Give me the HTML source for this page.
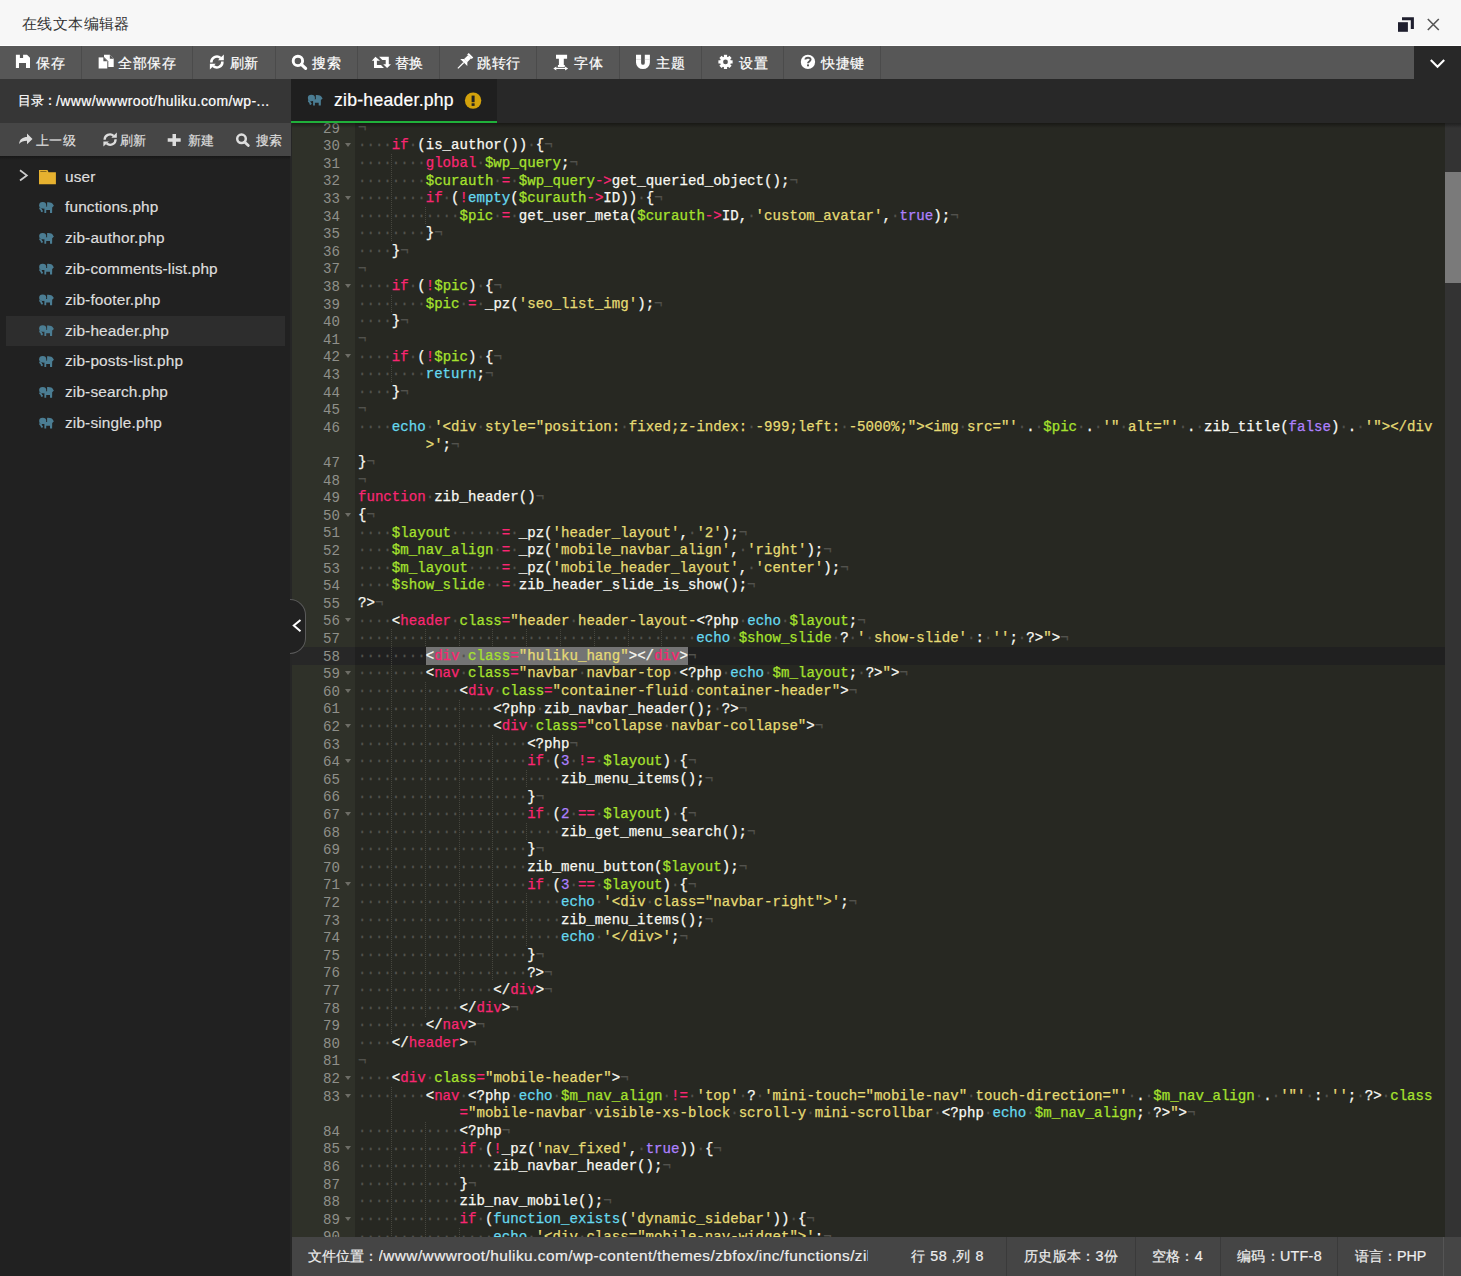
<!DOCTYPE html>
<html><head><meta charset="utf-8">
<style>
*{box-sizing:border-box;margin:0;padding:0}
html,body{width:1461px;height:1276px;overflow:hidden;background:#212121;font-family:"Liberation Sans",sans-serif}
.abs{position:absolute}
.t{position:absolute;white-space:nowrap;line-height:1;-webkit-text-stroke:0.2px currentColor}
#title{left:0;top:0;width:1461px;height:46px;background:#f7f7f7}
#tb{left:0;top:46px;width:1414px;height:33px;background:#575757}
#tbr{left:1414px;top:46px;width:47px;height:33px;background:#282828}
.dv{position:absolute;top:46px;width:1px;height:33px;background:#4b4b4b}
.tbt{color:#fff;font-size:13.8px;letter-spacing:0.7px;top:56.5px}
#side{left:0;top:79px;width:291px;height:1197px;background:#212121}
#dir{left:0;top:79px;width:291px;height:44px;background:#363636}
#stb{left:0;top:123px;width:291px;height:33px;background:#464646}
.sbt{color:#ddd;font-size:13.4px;letter-spacing:0.3px;top:134px}
.fl{color:#ddd;font-size:15.4px;letter-spacing:0.15px}
#sel{left:6px;top:316px;width:279px;height:30px;background:#2d2d2d}
#tabbar{left:291px;top:79px;width:1170px;height:44px;background:#282828}
#tab{left:291px;top:79px;width:206px;height:42px;background:#1f1f1f}
#tabline{left:291px;top:121px;width:206px;height:2px;background:#20b03a}
#editor{left:292px;top:123px;width:1169px;height:1114px;background:#272822;overflow:hidden}
#sideedge{left:290px;top:156px;width:2px;height:1120px;background:#262626}
#gutter{left:0;top:0;width:63px;height:1114px;background:#2f3129;color:#8f908a}
.gl{position:absolute;left:0;width:63px;height:17.6px;padding-top:1.5px;font-family:"Liberation Mono",monospace;font-size:14.1px;line-height:17.6px;padding-right:15px;text-align:right}
.gl.gact{background:#272727}
.fw{position:absolute;right:4px;top:6.5px;width:0;height:0;border-left:3.2px solid transparent;border-right:3.2px solid transparent;border-top:4.5px solid #6d6d66}
#code{left:63px;top:0;width:1090px;height:1114px}
.ln{position:absolute;left:3px;right:0;height:17.6px;padding-top:0.75px;-webkit-text-stroke:0.25px currentColor;font-family:"Liberation Mono",monospace;font-size:14.1px;line-height:17.6px;white-space:pre;color:#f8f8f2}
.actbg{position:absolute;left:0;right:0;height:17.6px;background:#202020}
.ln i{font-style:normal}
.k{color:#f92672}.s{color:#66d9ef}.v{color:#a6e22e}.q{color:#e6db74}.n{color:#ae81ff}.w{color:#52524d}
.ig{position:absolute;width:1px;background:repeating-linear-gradient(#47473f 0 1px,transparent 1px 2px)}
#guides{left:2px;top:0}
#selbox{left:70.7px;top:524px;width:262px;height:18px;background:#747474}
#sb{left:1153px;top:0;width:16px;height:1114px;background:#333}
#thumb{left:0;top:49px;width:16px;height:111px;background:#7a7a7a}
#status{left:292px;top:1237px;width:1169px;height:39px;background:#454545}
.stt{color:#eee;font-size:14.3px;top:1249px}
.sd{position:absolute;top:1237px;width:1px;height:39px;background:#3a3a3a}
#handle{left:290px;top:599px;width:16px;height:55px;background:#212121;border:1px solid #5a5a5a;border-left:none;border-radius:0 16px 16px 0}
#ov{position:absolute;left:0;top:0;width:1461px;height:1276px;pointer-events:none}
</style></head><body>
<div id="title" class="abs"></div>
<div class="abs" style="left:0;top:45px;width:1461px;height:1px;background:#fff"></div>
<div class="t" style="left:22px;top:17px;font-size:14.6px;letter-spacing:0.4px;color:#333;-webkit-text-stroke:0">在线文本编辑器</div>
<div id="tb" class="abs"></div>
<div id="tbr" class="abs"></div>
<div class="dv" style="left:81px"></div>
<div class="dv" style="left:192px"></div>
<div class="dv" style="left:275px"></div>
<div class="dv" style="left:357px"></div>
<div class="dv" style="left:439px"></div>
<div class="dv" style="left:536px"></div>
<div class="dv" style="left:619px"></div>
<div class="dv" style="left:701px"></div>
<div class="dv" style="left:783px"></div>
<div class="dv" style="left:880px"></div>
<div class="t tbt" style="left:36px">保存</div>
<div class="t tbt" style="left:118px">全部保存</div>
<div class="t tbt" style="left:229.5px">刷新</div>
<div class="t tbt" style="left:312px">搜索</div>
<div class="t tbt" style="left:394.5px">替换</div>
<div class="t tbt" style="left:477px">跳转行</div>
<div class="t tbt" style="left:574px">字体</div>
<div class="t tbt" style="left:656px">主题</div>
<div class="t tbt" style="left:739px">设置</div>
<div class="t tbt" style="left:821px">快捷键</div>

<div id="side" class="abs"></div>
<div id="dir" class="abs"></div>
<div class="t" style="left:17.5px;top:93.5px;font-size:13.4px;color:#fff">目录</div><div class="t" style="left:42.5px;top:93px;font-size:14.3px;color:#fff">：</div><div class="t" style="left:56px;top:93.5px;font-size:14px;letter-spacing:0.4px;color:#fff">/www/wwwroot/huliku.com/wp-...</div>
<div id="stb" class="abs"></div>
<div class="t sbt" style="left:36px">上一级</div>
<div class="t sbt" style="left:120px">刷新</div>
<div class="t sbt" style="left:188px">新建</div>
<div class="t sbt" style="left:256px">搜索</div>
<div id="sel" class="abs"></div>
<div class="t fl" style="left:65px;top:169px">user</div>
<div class="t fl" style="left:65px;top:199px">functions.php</div>
<div class="t fl" style="left:65px;top:230px">zib-author.php</div>
<div class="t fl" style="left:65px;top:261px">zib-comments-list.php</div>
<div class="t fl" style="left:65px;top:292px">zib-footer.php</div>
<div class="t fl" style="left:65px;top:323px">zib-header.php</div>
<div class="t fl" style="left:65px;top:353px">zib-posts-list.php</div>
<div class="t fl" style="left:65px;top:384px">zib-search.php</div>
<div class="t fl" style="left:65px;top:415px">zib-single.php</div>

<div id="tabbar" class="abs"></div>
<div id="tab" class="abs"></div>
<div id="tabline" class="abs"></div>
<div class="t" style="left:334px;top:92px;font-size:17.6px;letter-spacing:0.25px;color:#fff">zib-header.php</div>

<div id="editor" class="abs">
  <div id="gutter" class="abs">
<div class="gl" style="top:-4.0px">29</div>
<div class="gl" style="top:13.6px">30<b class="fw"></b></div>
<div class="gl" style="top:31.2px">31</div>
<div class="gl" style="top:48.8px">32</div>
<div class="gl" style="top:66.4px">33<b class="fw"></b></div>
<div class="gl" style="top:84.0px">34</div>
<div class="gl" style="top:101.6px">35</div>
<div class="gl" style="top:119.2px">36</div>
<div class="gl" style="top:136.8px">37</div>
<div class="gl" style="top:154.4px">38<b class="fw"></b></div>
<div class="gl" style="top:172.0px">39</div>
<div class="gl" style="top:189.6px">40</div>
<div class="gl" style="top:207.2px">41</div>
<div class="gl" style="top:224.8px">42<b class="fw"></b></div>
<div class="gl" style="top:242.4px">43</div>
<div class="gl" style="top:260.0px">44</div>
<div class="gl" style="top:277.6px">45</div>
<div class="gl" style="top:295.2px">46</div>
<div class="gl" style="top:330.4px">47</div>
<div class="gl" style="top:348.0px">48</div>
<div class="gl" style="top:365.6px">49</div>
<div class="gl" style="top:383.2px">50<b class="fw"></b></div>
<div class="gl" style="top:400.8px">51</div>
<div class="gl" style="top:418.4px">52</div>
<div class="gl" style="top:436.0px">53</div>
<div class="gl" style="top:453.6px">54</div>
<div class="gl" style="top:471.2px">55</div>
<div class="gl" style="top:488.8px">56<b class="fw"></b></div>
<div class="gl" style="top:506.4px">57</div>
<div class="gl gact" style="top:524.0px">58</div>
<div class="gl" style="top:541.6px">59<b class="fw"></b></div>
<div class="gl" style="top:559.2px">60<b class="fw"></b></div>
<div class="gl" style="top:576.8px">61</div>
<div class="gl" style="top:594.4px">62<b class="fw"></b></div>
<div class="gl" style="top:612.0px">63</div>
<div class="gl" style="top:629.6px">64<b class="fw"></b></div>
<div class="gl" style="top:647.2px">65</div>
<div class="gl" style="top:664.8px">66</div>
<div class="gl" style="top:682.4px">67<b class="fw"></b></div>
<div class="gl" style="top:700.0px">68</div>
<div class="gl" style="top:717.6px">69</div>
<div class="gl" style="top:735.2px">70</div>
<div class="gl" style="top:752.8px">71<b class="fw"></b></div>
<div class="gl" style="top:770.4px">72</div>
<div class="gl" style="top:788.0px">73</div>
<div class="gl" style="top:805.6px">74</div>
<div class="gl" style="top:823.2px">75</div>
<div class="gl" style="top:840.8px">76</div>
<div class="gl" style="top:858.4px">77</div>
<div class="gl" style="top:876.0px">78</div>
<div class="gl" style="top:893.6px">79</div>
<div class="gl" style="top:911.2px">80</div>
<div class="gl" style="top:928.8px">81</div>
<div class="gl" style="top:946.4px">82<b class="fw"></b></div>
<div class="gl" style="top:964.0px">83<b class="fw"></b></div>
<div class="gl" style="top:999.2px">84</div>
<div class="gl" style="top:1016.8px">85<b class="fw"></b></div>
<div class="gl" style="top:1034.4px">86</div>
<div class="gl" style="top:1052.0px">87</div>
<div class="gl" style="top:1069.6px">88</div>
<div class="gl" style="top:1087.2px">89<b class="fw"></b></div>
<div class="gl" style="top:1104.8px">90</div>
  </div>
  <div id="code" class="abs">
<div class="actbg" style="top:524.0px"></div><div id="selbox" class="abs"></div>
<div class="ln" style="top:-4.0px"><i class="w">¬</i></div>
<div class="ln" style="top:13.6px"><i class="w">····</i><i class="k">if</i><i class="w">·</i>(is_author())<i class="w">·</i>{<i class="w">¬</i></div>
<div class="ln" style="top:31.2px"><i class="w">········</i><i class="k">global</i><i class="w">·</i><i class="v">$wp_query</i>;<i class="w">¬</i></div>
<div class="ln" style="top:48.8px"><i class="w">········</i><i class="v">$curauth</i><i class="w">·</i><i class="k">=</i><i class="w">·</i><i class="v">$wp_query</i><i class="k">-&gt;</i>get_queried_object();<i class="w">¬</i></div>
<div class="ln" style="top:66.4px"><i class="w">········</i><i class="k">if</i><i class="w">·</i>(<i class="k">!</i><i class="s">empty</i>(<i class="v">$curauth</i><i class="k">-&gt;</i>ID))<i class="w">·</i>{<i class="w">¬</i></div>
<div class="ln" style="top:84.0px"><i class="w">············</i><i class="v">$pic</i><i class="w">·</i><i class="k">=</i><i class="w">·</i>get_user_meta(<i class="v">$curauth</i><i class="k">-&gt;</i>ID,<i class="w">·</i><i class="q">'custom_avatar'</i>,<i class="w">·</i><i class="n">true</i>);<i class="w">¬</i></div>
<div class="ln" style="top:101.6px"><i class="w">········</i>}<i class="w">¬</i></div>
<div class="ln" style="top:119.2px"><i class="w">····</i>}<i class="w">¬</i></div>
<div class="ln" style="top:136.8px"><i class="w">¬</i></div>
<div class="ln" style="top:154.4px"><i class="w">····</i><i class="k">if</i><i class="w">·</i>(<i class="k">!</i><i class="v">$pic</i>)<i class="w">·</i>{<i class="w">¬</i></div>
<div class="ln" style="top:172.0px"><i class="w">········</i><i class="v">$pic</i><i class="w">·</i><i class="k">=</i><i class="w">·</i>_pz(<i class="q">'seo_list_img'</i>);<i class="w">¬</i></div>
<div class="ln" style="top:189.6px"><i class="w">····</i>}<i class="w">¬</i></div>
<div class="ln" style="top:207.2px"><i class="w">¬</i></div>
<div class="ln" style="top:224.8px"><i class="w">····</i><i class="k">if</i><i class="w">·</i>(<i class="k">!</i><i class="v">$pic</i>)<i class="w">·</i>{<i class="w">¬</i></div>
<div class="ln" style="top:242.4px"><i class="w">········</i><i class="s">return</i>;<i class="w">¬</i></div>
<div class="ln" style="top:260.0px"><i class="w">····</i>}<i class="w">¬</i></div>
<div class="ln" style="top:277.6px"><i class="w">¬</i></div>
<div class="ln" style="top:295.2px"><i class="w">····</i><i class="s">echo</i><i class="w">·</i><i class="q">'&lt;div</i><i class="w">·</i><i class="q">style="position:</i><i class="w">·</i><i class="q">fixed;z-index:</i><i class="w">·</i><i class="q">-999;left:</i><i class="w">·</i><i class="q">-5000%;"&gt;&lt;img</i><i class="w">·</i><i class="q">src="'</i><i class="w">·</i>.<i class="w">·</i><i class="v">$pic</i><i class="w">·</i>.<i class="w">·</i><i class="q">'"</i><i class="w">·</i><i class="q">alt="'</i><i class="w">·</i>.<i class="w">·</i>zib_title(<i class="n">false</i>)<i class="w">·</i>.<i class="w">·</i><i class="q">'"&gt;&lt;/div</i></div>
<div class="ln" style="top:312.8px">        <i class="q">&gt;'</i>;<i class="w">¬</i></div>
<div class="ln" style="top:330.4px">}<i class="w">¬</i></div>
<div class="ln" style="top:348.0px"><i class="w">¬</i></div>
<div class="ln" style="top:365.6px"><i class="k">function</i><i class="w">·</i>zib_header()<i class="w">¬</i></div>
<div class="ln" style="top:383.2px">{<i class="w">¬</i></div>
<div class="ln" style="top:400.8px"><i class="w">····</i><i class="v">$layout</i><i class="w">······</i><i class="k">=</i><i class="w">·</i>_pz(<i class="q">'header_layout'</i>,<i class="w">·</i><i class="q">'2'</i>);<i class="w">¬</i></div>
<div class="ln" style="top:418.4px"><i class="w">····</i><i class="v">$m_nav_align</i><i class="w">·</i><i class="k">=</i><i class="w">·</i>_pz(<i class="q">'mobile_navbar_align'</i>,<i class="w">·</i><i class="q">'right'</i>);<i class="w">¬</i></div>
<div class="ln" style="top:436.0px"><i class="w">····</i><i class="v">$m_layout</i><i class="w">····</i><i class="k">=</i><i class="w">·</i>_pz(<i class="q">'mobile_header_layout'</i>,<i class="w">·</i><i class="q">'center'</i>);<i class="w">¬</i></div>
<div class="ln" style="top:453.6px"><i class="w">····</i><i class="v">$show_slide</i><i class="w">··</i><i class="k">=</i><i class="w">·</i>zib_header_slide_is_show();<i class="w">¬</i></div>
<div class="ln" style="top:471.2px">?&gt;<i class="w">¬</i></div>
<div class="ln" style="top:488.8px"><i class="w">····</i>&lt;<i class="k">header</i><i class="w">·</i><i class="v">class</i><i class="k">=</i><i class="q">"header</i><i class="w">·</i><i class="q">header-layout-</i>&lt;?php<i class="w">·</i><i class="s">echo</i><i class="w">·</i><i class="v">$layout</i>;<i class="w">¬</i></div>
<div class="ln" style="top:506.4px"><i class="w">········································</i><i class="s">echo</i><i class="w">·</i><i class="v">$show_slide</i><i class="w">·</i>?<i class="w">·</i><i class="q">'</i><i class="w">·</i><i class="q">show-slide'</i><i class="w">·</i>:<i class="w">·</i><i class="q">''</i>;<i class="w">·</i>?&gt;<i class="q">"</i>&gt;<i class="w">¬</i></div>
<div class="ln" style="top:524.0px"><i class="w">········</i>&lt;<i class="k">div</i><i class="w">·</i><i class="v">class</i><i class="k">=</i><i class="q">"huliku_hang"</i>&gt;&lt;/<i class="k">div</i>&gt;<i class="w">¬</i></div>
<div class="ln" style="top:541.6px"><i class="w">········</i>&lt;<i class="k">nav</i><i class="w">·</i><i class="v">class</i><i class="k">=</i><i class="q">"navbar</i><i class="w">·</i><i class="q">navbar-top</i><i class="w">·</i>&lt;?php<i class="w">·</i><i class="s">echo</i><i class="w">·</i><i class="v">$m_layout</i>;<i class="w">·</i>?&gt;<i class="q">"</i>&gt;<i class="w">¬</i></div>
<div class="ln" style="top:559.2px"><i class="w">············</i>&lt;<i class="k">div</i><i class="w">·</i><i class="v">class</i><i class="k">=</i><i class="q">"container-fluid</i><i class="w">·</i><i class="q">container-header"</i>&gt;<i class="w">¬</i></div>
<div class="ln" style="top:576.8px"><i class="w">················</i>&lt;?php<i class="w">·</i>zib_navbar_header();<i class="w">·</i>?&gt;<i class="w">¬</i></div>
<div class="ln" style="top:594.4px"><i class="w">················</i>&lt;<i class="k">div</i><i class="w">·</i><i class="v">class</i><i class="k">=</i><i class="q">"collapse</i><i class="w">·</i><i class="q">navbar-collapse"</i>&gt;<i class="w">¬</i></div>
<div class="ln" style="top:612.0px"><i class="w">····················</i>&lt;?php<i class="w">¬</i></div>
<div class="ln" style="top:629.6px"><i class="w">····················</i><i class="k">if</i><i class="w">·</i>(<i class="n">3</i><i class="w">·</i><i class="k">!=</i><i class="w">·</i><i class="v">$layout</i>)<i class="w">·</i>{<i class="w">¬</i></div>
<div class="ln" style="top:647.2px"><i class="w">························</i>zib_menu_items();<i class="w">¬</i></div>
<div class="ln" style="top:664.8px"><i class="w">····················</i>}<i class="w">¬</i></div>
<div class="ln" style="top:682.4px"><i class="w">····················</i><i class="k">if</i><i class="w">·</i>(<i class="n">2</i><i class="w">·</i><i class="k">==</i><i class="w">·</i><i class="v">$layout</i>)<i class="w">·</i>{<i class="w">¬</i></div>
<div class="ln" style="top:700.0px"><i class="w">························</i>zib_get_menu_search();<i class="w">¬</i></div>
<div class="ln" style="top:717.6px"><i class="w">····················</i>}<i class="w">¬</i></div>
<div class="ln" style="top:735.2px"><i class="w">····················</i>zib_menu_button(<i class="v">$layout</i>);<i class="w">¬</i></div>
<div class="ln" style="top:752.8px"><i class="w">····················</i><i class="k">if</i><i class="w">·</i>(<i class="n">3</i><i class="w">·</i><i class="k">==</i><i class="w">·</i><i class="v">$layout</i>)<i class="w">·</i>{<i class="w">¬</i></div>
<div class="ln" style="top:770.4px"><i class="w">························</i><i class="s">echo</i><i class="w">·</i><i class="q">'&lt;div</i><i class="w">·</i><i class="q">class="navbar-right"&gt;'</i>;<i class="w">¬</i></div>
<div class="ln" style="top:788.0px"><i class="w">························</i>zib_menu_items();<i class="w">¬</i></div>
<div class="ln" style="top:805.6px"><i class="w">························</i><i class="s">echo</i><i class="w">·</i><i class="q">'&lt;/div&gt;'</i>;<i class="w">¬</i></div>
<div class="ln" style="top:823.2px"><i class="w">····················</i>}<i class="w">¬</i></div>
<div class="ln" style="top:840.8px"><i class="w">····················</i>?&gt;<i class="w">¬</i></div>
<div class="ln" style="top:858.4px"><i class="w">················</i>&lt;/<i class="k">div</i>&gt;<i class="w">¬</i></div>
<div class="ln" style="top:876.0px"><i class="w">············</i>&lt;/<i class="k">div</i>&gt;<i class="w">¬</i></div>
<div class="ln" style="top:893.6px"><i class="w">········</i>&lt;/<i class="k">nav</i>&gt;<i class="w">¬</i></div>
<div class="ln" style="top:911.2px"><i class="w">····</i>&lt;/<i class="k">header</i>&gt;<i class="w">¬</i></div>
<div class="ln" style="top:928.8px"><i class="w">¬</i></div>
<div class="ln" style="top:946.4px"><i class="w">····</i>&lt;<i class="k">div</i><i class="w">·</i><i class="v">class</i><i class="k">=</i><i class="q">"mobile-header"</i>&gt;<i class="w">¬</i></div>
<div class="ln" style="top:964.0px"><i class="w">········</i>&lt;<i class="k">nav</i><i class="w">·</i>&lt;?php<i class="w">·</i><i class="s">echo</i><i class="w">·</i><i class="v">$m_nav_align</i><i class="w">·</i><i class="k">!=</i><i class="w">·</i><i class="q">'top'</i><i class="w">·</i>?<i class="w">·</i><i class="q">'mini-touch="mobile-nav"</i><i class="w">·</i><i class="q">touch-direction="'</i><i class="w">·</i>.<i class="w">·</i><i class="v">$m_nav_align</i><i class="w">·</i>.<i class="w">·</i><i class="q">'"'</i><i class="w">·</i>:<i class="w">·</i><i class="q">''</i>;<i class="w">·</i>?&gt;<i class="w">·</i><i class="v">class</i></div>
<div class="ln" style="top:981.6px">            <i class="k">=</i><i class="q">"mobile-navbar</i><i class="w">·</i><i class="q">visible-xs-block</i><i class="w">·</i><i class="q">scroll-y</i><i class="w">·</i><i class="q">mini-scrollbar</i><i class="w">·</i>&lt;?php<i class="w">·</i><i class="s">echo</i><i class="w">·</i><i class="v">$m_nav_align</i>;<i class="w">·</i>?&gt;<i class="q">"</i>&gt;<i class="w">¬</i></div>
<div class="ln" style="top:999.2px"><i class="w">············</i>&lt;?php<i class="w">¬</i></div>
<div class="ln" style="top:1016.8px"><i class="w">············</i><i class="k">if</i><i class="w">·</i>(<i class="k">!</i>_pz(<i class="q">'nav_fixed'</i>,<i class="w">·</i><i class="n">true</i>))<i class="w">·</i>{<i class="w">¬</i></div>
<div class="ln" style="top:1034.4px"><i class="w">················</i>zib_navbar_header();<i class="w">¬</i></div>
<div class="ln" style="top:1052.0px"><i class="w">············</i>}<i class="w">¬</i></div>
<div class="ln" style="top:1069.6px"><i class="w">············</i>zib_nav_mobile();<i class="w">¬</i></div>
<div class="ln" style="top:1087.2px"><i class="w">············</i><i class="k">if</i><i class="w">·</i>(<i class="s">function_exists</i>(<i class="q">'dynamic_sidebar'</i>))<i class="w">·</i>{<i class="w">¬</i></div>
<div class="ln" style="top:1104.8px"><i class="w">················</i><i class="s">echo</i><i class="w">·</i><i class="q">'&lt;div</i><i class="w">·</i><i class="q">class="mobile-nav-widget"&gt;'</i>;<i class="w">¬</i></div>
  <div id="guides" class="abs">
<div class="ig" style="left:33.83px;top:31.2px;height:88.0px"></div>
<div class="ig" style="left:33.83px;top:172.0px;height:17.6px"></div>
<div class="ig" style="left:33.83px;top:242.4px;height:17.6px"></div>
<div class="ig" style="left:33.83px;top:506.4px;height:404.8px"></div>
<div class="ig" style="left:33.83px;top:964.0px;height:158.4px"></div>
<div class="ig" style="left:67.66px;top:84.0px;height:17.6px"></div>
<div class="ig" style="left:67.66px;top:506.4px;height:17.6px"></div>
<div class="ig" style="left:67.66px;top:559.2px;height:334.4px"></div>
<div class="ig" style="left:67.66px;top:999.2px;height:123.2px"></div>
<div class="ig" style="left:101.50px;top:506.4px;height:17.6px"></div>
<div class="ig" style="left:101.50px;top:576.8px;height:299.2px"></div>
<div class="ig" style="left:101.50px;top:1034.4px;height:17.6px"></div>
<div class="ig" style="left:101.50px;top:1104.8px;height:17.6px"></div>
<div class="ig" style="left:135.33px;top:506.4px;height:17.6px"></div>
<div class="ig" style="left:135.33px;top:612.0px;height:246.4px"></div>
<div class="ig" style="left:169.16px;top:506.4px;height:17.6px"></div>
<div class="ig" style="left:169.16px;top:647.2px;height:17.6px"></div>
<div class="ig" style="left:169.16px;top:700.0px;height:17.6px"></div>
<div class="ig" style="left:169.16px;top:770.4px;height:52.8px"></div>
<div class="ig" style="left:202.99px;top:506.4px;height:17.6px"></div>
<div class="ig" style="left:236.82px;top:506.4px;height:17.6px"></div>
<div class="ig" style="left:270.66px;top:506.4px;height:17.6px"></div>
<div class="ig" style="left:304.49px;top:506.4px;height:17.6px"></div>
  </div>
  </div>
  <div id="sb" class="abs"><div id="thumb" class="abs"></div></div>
</div>
<div id="sideedge" class="abs"></div>
<div class="abs" style="left:291px;top:123px;width:1px;height:33px;background:#262626"></div>
<div class="abs" style="left:0;top:156px;width:290px;height:4px;background:linear-gradient(rgba(0,0,0,0.3),rgba(0,0,0,0))"></div>
<div class="abs" style="left:292px;top:123px;width:1169px;height:5px;background:linear-gradient(rgba(0,0,0,0.38),rgba(0,0,0,0))"></div>

<div id="status" class="abs"></div>
<div class="t stt" style="left:308px">文件位置：</div><div class="t stt" style="left:378.5px;width:489px;overflow:hidden;font-size:15.4px;letter-spacing:0.44px;top:1248px;line-height:1.1">/www/wwwroot/huliku.com/wp-content/themes/zbfox/inc/functions/zib-header.php</div>
<div class="t stt" style="left:911px;letter-spacing:0.6px">行 58 ,列 8</div>
<div class="sd" style="left:1006px"></div>
<div class="t stt" style="left:1024px;letter-spacing:0.3px">历史版本：3份</div>
<div class="sd" style="left:1135px"></div>
<div class="t stt" style="left:1151.5px;letter-spacing:0.4px">空格：4</div>
<div class="sd" style="left:1220px"></div>
<div class="t stt" style="left:1237px;letter-spacing:0.3px">编码：UTF-8</div>
<div class="sd" style="left:1337px"></div>
<div class="t stt" style="left:1355px">语言：PHP</div>
<div class="sd" style="left:1443px;background:#555"></div>
<div id="handle" class="abs"></div>

<svg id="ov" viewBox="0 0 1461 1276">
<defs>
 <g id="eleph"><ellipse cx="6.7" cy="7.3" rx="3.55" ry="3.2"/><path d="M11.1 4.3 C14 4 16.3 4.8 17.1 6.6 L17.9 7.7 L16.2 9.4 L16.1 14.9 H14 V12.1 H10.2 V14.9 H8.4 V10.4 H6.5 L9.8 8.5 H11.1 Z"/><path d="M3.4 9.4 L5.6 10.4 L6.2 11.9 L7.1 12.9 L6.1 14.3 L4.9 13.7 L4.6 12.3 L3.2 10.9 Z"/></g>
</defs>
<!-- title icons -->
<path d="M1402 17.2 H1413.9 V28.9 H1410.8 V20.3 H1402 Z" fill="#1f1f2e"/>
<rect x="1398" y="22.2" width="9.9" height="9.6" fill="#1f1f2e"/>
<path d="M1427.8 19 L1438.8 30 M1438.8 19 L1427.8 30" stroke="#555" stroke-width="1.6"/>
<!-- chevron -->
<path d="M1430.8 60 L1437.5 66.7 L1444.2 60" stroke="#fff" stroke-width="2.1" fill="none"/>
<!-- floppy -->
<path fill="#fff" fill-rule="evenodd" d="M15.9 54.8 H27 L30 57.8 V68.1 H15.9 Z M19.9 54.8 V58 H23.1 V54.8 Z M19 63.1 V68.1 H26 V63.1 Z"/>
<!-- copy -->
<path fill="#fff" d="M104 54.8 H109.8 L113.7 58.7 V67 H104 Z"/>
<path fill="#575757" d="M109.8 54.8 V58.7 H113.7 Z"/>
<path fill="#fff" stroke="#575757" stroke-width="1" d="M98.1 56.9 H103.4 L107.8 61.3 V69 H98.1 Z"/>
<path fill="#575757" d="M103.4 57.2 V61.3 H107.5 Z"/>
<!-- refresh -->
<path d="M211.3 62.5 A5.6 5.6 0 0 1 220.6 58" stroke="#fff" stroke-width="2.5" fill="none"/>
<path d="M218 60.2 H223.8 V54.6 Z" fill="#fff"/>
<path d="M222.4 61.5 A5.6 5.6 0 0 1 213.1 66" stroke="#fff" stroke-width="2.5" fill="none"/>
<path d="M215.7 63.8 H209.9 V69.4 Z" fill="#fff"/>
<!-- search -->
<circle cx="297.9" cy="60.9" r="4.7" stroke="#fff" stroke-width="2.9" fill="none"/>
<path d="M301.3 64.3 L305.6 68.3" stroke="#fff" stroke-width="3.2" stroke-linecap="round"/>
<!-- retweet -->
<path fill="#fff" d="M375.45 56.8 L380 60.7 H376.9 V65 H381 L384 68 H374 V60.7 H371.85 Z"/>
<path fill="#fff" d="M379.1 56.8 H388.8 V64.2 H391 L387.1 68 L383.2 64.2 H385.7 V60 H382.3 Z"/>
<!-- thumbtack -->
<g transform="translate(464.5 61.8) rotate(45)" fill="#fff">
 <rect x="-3.2" y="-9.2" width="6.4" height="2.2"/>
 <rect x="-2.2" y="-7.2" width="4.4" height="5.6"/>
 <path d="M-2.2 -1.8 L-5 1 H5 L2.2 -1.8 Z"/>
 <rect x="-0.6" y="1" width="1.2" height="8.4"/>
</g>
<!-- T -->
<path fill="#fff" d="M556 54.7 H567.1 V58.8 H563.8 V65 H564.8 V67 H557.9 V65 H558.9 V58.8 H556 Z"/>
<path fill="#fff" d="M553.3 68.4 L556.3 66.4 V67.8 H565.1 V66.4 L568.1 68.4 L565.1 70.4 V69 H556.3 V70.4 Z"/>
<!-- magnet U -->
<path fill="#fff" d="M636 54.8 H641.1 V63 A1.85 1.85 0 0 0 644.8 63 V54.8 H649.9 V62.6 A6.95 6.5 0 0 1 636 62.6 Z"/>
<path stroke="#cfcfcf" stroke-width="0.7" d="M636 59.4 H641.1 M644.8 59.4 H649.9"/>
<!-- cog -->
<g transform="translate(725.5 61.9)" fill="#fff">
 <circle r="5.4"/>
 <rect x="-1.6" y="-7.1" width="3.2" height="14.2"/>
 <rect x="-7.1" y="-1.6" width="14.2" height="3.2"/>
 <rect x="-1.6" y="-7.1" width="3.2" height="14.2" transform="rotate(45)"/>
 <rect x="-1.6" y="-7.1" width="3.2" height="14.2" transform="rotate(-45)"/>
 <circle r="2.4" fill="#575757"/>
</g>
<!-- question -->
<circle cx="807.95" cy="61.9" r="7.15" fill="#fff"/>
<path d="M805.4 59.6 C805.4 57.2 810.6 56.9 810.6 59.6 C810.6 61.3 808 61.5 808 63.2" stroke="#575757" stroke-width="1.9" fill="none"/>
<rect x="807" y="64.4" width="2" height="1.9" fill="#575757"/>
<!-- sidebar subtoolbar icons -->
<path fill="#ddd" d="M19.1 144.1 C19.5 139 23 137 27 137 V133.6 L32.5 139 L27 144.2 V140.8 C23.5 140.8 21 141.5 19.1 144.1 Z"/>
<path d="M104.6 139.8 A5.4 5.4 0 0 1 113.6 135.8" stroke="#ddd" stroke-width="2.3" fill="none"/>
<path d="M111.3 137.8 H116.8 V132.6 Z" fill="#ddd"/>
<path d="M115.6 139.2 A5.4 5.4 0 0 1 106.6 143.4" stroke="#ddd" stroke-width="2.3" fill="none"/>
<path d="M108.9 141.4 H103.4 V146.6 Z" fill="#ddd"/>
<path fill="#ddd" d="M172.5 134 H176 V138.3 H180.7 V141.8 H176 V146 H172.5 V141.8 H167.7 V138.3 H172.5 Z"/>
<circle cx="241.5" cy="138.8" r="4.3" stroke="#ddd" stroke-width="2.5" fill="none"/>
<path d="M244.6 142 L248.3 145.5" stroke="#ddd" stroke-width="2.8" stroke-linecap="round"/>
<!-- tree -->
<path d="M20 170.3 L26.8 175.4 L20 180.5" stroke="#ccc" stroke-width="1.8" fill="none"/>
<path fill="#e6b12f" d="M39 169.9 H47.5 L48.5 172.3 H55.9 V184.2 H39 Z"/>
<path fill="#8a6a1c" d="M40.3 171 H46.5 V172 H40.3 Z"/>
<use href="#eleph" transform="translate(36 198.0)" fill="#4b7d93"/>
<use href="#eleph" transform="translate(36 228.8)" fill="#4b7d93"/>
<use href="#eleph" transform="translate(36 259.6)" fill="#4b7d93"/>
<use href="#eleph" transform="translate(36 290.4)" fill="#4b7d93"/>
<use href="#eleph" transform="translate(36 321.2)" fill="#4b7d93"/>
<use href="#eleph" transform="translate(36 352.0)" fill="#4b7d93"/>
<use href="#eleph" transform="translate(36 382.8)" fill="#4b7d93"/>
<use href="#eleph" transform="translate(36 413.6)" fill="#4b7d93"/>

<!-- tab icons -->
<use href="#eleph" transform="translate(304.7 90.7)" fill="#4b7d93"/>
<circle cx="473.1" cy="100.6" r="8.2" fill="#d3a20c"/>
<rect x="471.6" y="95.6" width="3" height="6.6" fill="#222"/>
<rect x="471.6" y="103.3" width="3" height="2.6" fill="#222"/>
<!-- handle chevron -->
<path d="M300.5 620 L293.8 625.6 L300.5 631.2" stroke="#fff" stroke-width="2" fill="none"/>

</svg>
</body></html>
